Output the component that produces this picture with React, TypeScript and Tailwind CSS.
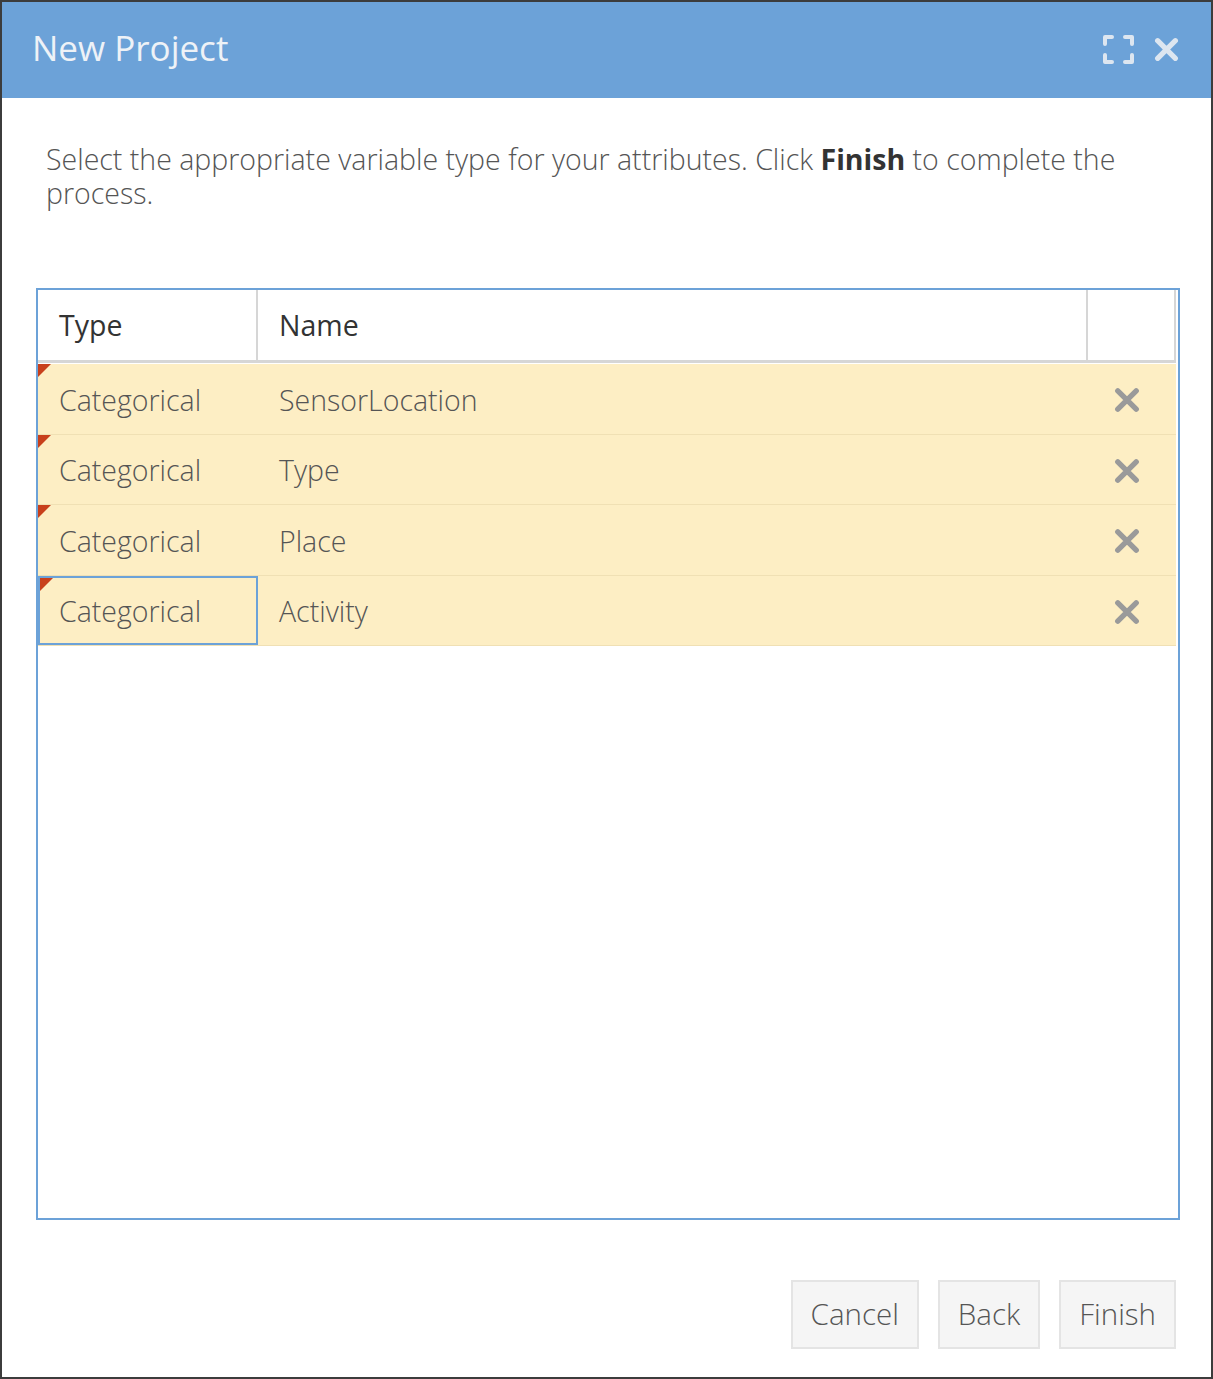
import React from "react";

const rows = ["SensorLocation", "Type", "Place", "Activity"];

function MaximizeIcon() {
  return (
    <svg width="33" height="31" viewBox="0 0 33 31" fill="none" stroke="#dde6f0" strokeWidth="4" strokeLinecap="round" strokeLinejoin="round">
      <path d="M3 10V3h7" />
      <path d="M23 3h7v7" />
      <path d="M30 21v7h-7" />
      <path d="M10 28H3v-7" />
    </svg>
  );
}

function CloseIcon({ size, color, stroke }: { size: number; color: string; stroke: number }) {
  return (
    <svg width={size} height={size} viewBox="0 0 24 24" fill="none" stroke={color} strokeWidth={stroke} strokeLinecap="round">
      <path d="M3.5 3.5l17 17M20.5 3.5l-17 17" />
    </svg>
  );
}

export default function App() {
  return (
    <div className="w-[1213px] h-[1379px] border-2 border-[#3c3c3c] bg-white flex flex-col font-['Open_Sans',sans-serif]">
      {/* Title bar */}
      <div className="h-[96px] bg-[#6ca2d8] flex items-center justify-between pl-[30px] pr-[32px] shrink-0">
        <h1 className="text-[35px] text-[#eef2f7] leading-none mb-[5px]">New Project</h1>
        <div className="flex items-center gap-[19px] mb-[2px]">
          <MaximizeIcon />
          <CloseIcon size={25} color="#dde6f0" stroke={5} />
        </div>
      </div>

      <div className="flex-1 flex flex-col pl-[34px] pr-[31px]">
        <p className="mt-[44px] ml-[10px] text-[28.5px] leading-[34px] text-[#555] font-light">
          Select the appropriate variable type for your attributes. Click{" "}
          <span className="font-bold text-[#333]">Finish</span> to complete the process.
        </p>

        {/* Table */}
        <div className="mt-[78px] h-[932px] border-2 border-[#6ca2d8] pr-[2px]">
          <div className="flex h-[73px] border-b-[3px] border-[#d6d6d6] text-[28.5px] text-[#333]">
            <div className="w-[220px] border-r-2 border-[#d6d6d6] flex items-center pl-[21px]">Type</div>
            <div className="w-[830px] border-r-2 border-[#d6d6d6] flex items-center pl-[21px]">Name</div>
            <div className="flex-1 border-r-2 border-[#d6d6d6]" />
          </div>
          <div className="pt-[1px]">
            {rows.map((name, i) => (
              <div key={name} className="flex h-[70.5px] bg-[#fdeec4] border-b border-[#f0e0b4] text-[28.5px] text-[#555] font-light">
                <div
                  className={
                    "relative w-[220px] flex items-center pt-[3px] " +
                    (i === rows.length - 1 ? "border-2 border-[#6ca2d8] pl-[19px]" : "pl-[21px]")
                  }
                >
                  <span className="absolute left-0 top-0 w-0 h-0 border-t-[13px] border-t-[#c8401c] border-r-[13px] border-r-transparent" />
                  Categorical
                </div>
                <div className="w-[830px] flex items-center pl-[21px] pt-[3px]">{name}</div>
                <div className="flex-1 flex items-center justify-center pr-[10px] pt-[3px]">
                  <CloseIcon size={26} color="#9a9a9a" stroke={5} />
                </div>
              </div>
            ))}
          </div>
        </div>

        {/* Footer buttons */}
        <div className="mt-[60px] flex justify-end gap-[19px] pr-[4px]">
          {["Cancel", "Back", "Finish"].map((b) => (
            <button
              key={b}
              className="h-[69px] px-[18px] bg-[#f5f5f5] border-2 border-[#e4e4e4] text-[29.5px] text-[#555] font-light"
            >
              {b}
            </button>
          ))}
        </div>
      </div>
    </div>
  );
}
